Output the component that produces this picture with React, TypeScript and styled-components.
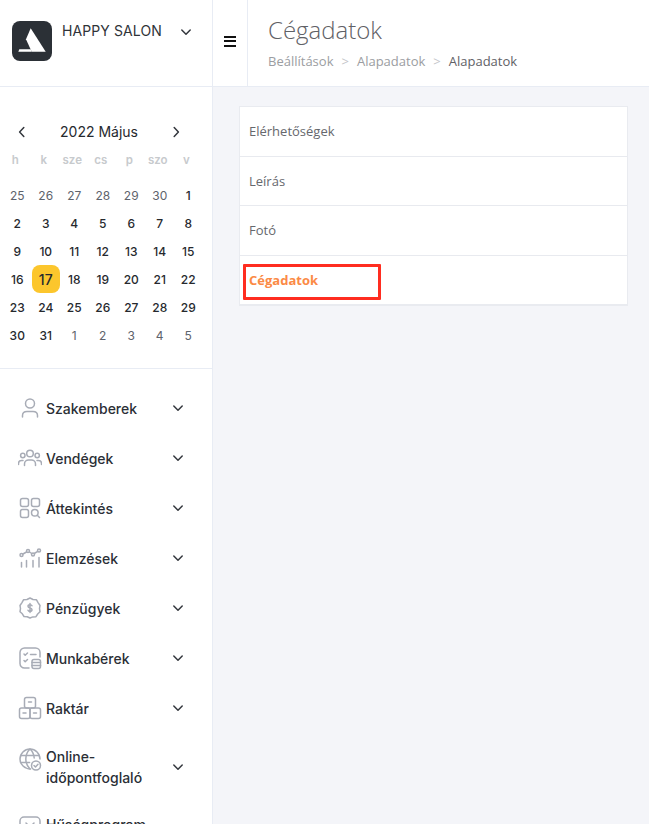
import React from 'react';
import styled, { createGlobalStyle } from 'styled-components';

const GlobalStyle = createGlobalStyle`
  html, body { margin: 0; padding: 0; background: #f4f5f9; }
  * { box-sizing: border-box; }
`;

const weekdays = ['h', 'k', 'sze', 'cs', 'p', 'szo', 'v'];

interface DayCell { label: number; muted?: 'prev' | 'next'; today?: boolean }

const days: DayCell[] = [
  ...[25, 26, 27, 28, 29, 30].map((label) => ({ label, muted: 'prev' as const })),
  ...Array.from({ length: 31 }, (_, i) => ({ label: i + 1, today: i + 1 === 17 })),
  ...[1, 2, 3, 4, 5].map((label) => ({ label, muted: 'next' as const })),
];

const Ic = ({ children }: { children: React.ReactNode }) => (
  <svg width="24" height="24" viewBox="0 0 24 24" fill="none" stroke="#a8acb6" strokeWidth="1.5" strokeLinecap="round" strokeLinejoin="round">
    {children}
  </svg>
);

const Chevron = ({ dir = 'down', color = '#33373d' }: { dir?: 'down' | 'left' | 'right'; color?: string }) => (
  <svg width="12" height="12" viewBox="0 0 12 12" fill="none" stroke={color} strokeWidth="1.5" strokeLinecap="round" strokeLinejoin="round">
    {dir === 'down' && <path d="M1.8 4l4.2 4.2L10.200 4" />}
    {dir === 'left' && <path d="M7.800 1.500L3.600 6l4.200 4.500" />}
    {dir === 'right' && <path d="M4.200 1.500L8.400 6l-4.200 4.500" />}
  </svg>
);

const menu: { label: React.ReactNode; tall?: boolean; icon: React.ReactNode }[] = [
  {
    label: 'Szakemberek',
    icon: (
      <Ic>
        <circle cx="12" cy="7.500" r="4.500" />
        <path d="M4.500 21v-1.500c0-2.500 2-4 4.500-4h6c2.500 0 4.500 1.500 4.500 4V21" />
      </Ic>
    ),
  },
  {
    label: 'Vendégek',
    icon: (
      <Ic>
        <circle cx="12" cy="7.500" r="3.300" />
        <circle cx="4.800" cy="9.500" r="2.200" />
        <circle cx="19.200" cy="9.500" r="2.200" />
        <path d="M6.500 19.500v-1.500c0-2.400 2-4 4-4h3c2 0 4 1.600 4 4v1.500" />
        <path d="M.5 18.500v-1c0-1.800 1.300-3 3-3h1.500" />
        <path d="M23.500 18.500v-1c0-1.800-1.300-3-3-3H19" />
      </Ic>
    ),
  },
  {
    label: 'Áttekintés',
    icon: (
      <Ic>
        <rect x="2.500" y="2.500" width="8" height="8" rx="2" />
        <rect x="13.500" y="2.500" width="8" height="8" rx="2" />
        <rect x="2.500" y="13.500" width="8" height="8" rx="2" />
        <circle cx="16.800" cy="16.800" r="3.300" />
        <path d="M19.300 19.300l2.200 2.200" />
      </Ic>
    ),
  },
  {
    label: 'Elemzések',
    icon: (
      <Ic>
        <circle cx="3.500" cy="9" r="1.500" />
        <circle cx="10" cy="5" r="1.500" />
        <circle cx="15" cy="8.500" r="1.500" />
        <circle cx="21" cy="4.500" r="1.500" />
        <path d="M5 8l3.500-2M11.500 6l2.200 1.500M16.300 7.500l3.400-2.200" />
        <path d="M3.500 16.500V21M8.500 14.500V21M15 14.500V21M21 11.500V21" />
      </Ic>
    ),
  },
  {
    label: 'Pénzügyek',
    icon: (
      <Ic>
        <path d="M12 2l3 1.500 3.500.3 1.700 3 1.800 2.700-.5 3 .5 3.200-2.300 2.300-1.700 2.700-3.200.2L12 22l-2.800-1.300-3.200-.2-1.700-2.700L2 15.700l.5-3.200-.5-3 1.800-2.700 1.700-3L9 3.500z" />
        <path d="M14 9.800c-.3-.7-1-1.100-2-1.100-1.200 0-2 .6-2 1.600 0 2.300 4 1.200 4 3.500 0 1-.8 1.600-2 1.600-1 0-1.700-.4-2-1.100M12 7.500v9" />
      </Ic>
    ),
  },
  {
    label: 'Munkabérek',
    icon: (
      <Ic>
        <path d="M11 22H6.500A4.500 4.500 0 0 1 2 17.500v-11A4.500 4.500 0 0 1 6.500 2h11A4.500 4.500 0 0 1 22 6.500V11" />
        <path d="M6 8l1.200 1.200L9.500 7M12.500 8.500H18M6 14.500l1.200 1.200 2.300-2.200" />
        <rect x="14" y="13.500" width="8.500" height="9" rx="2" />
        <path d="M14 16.500h8.500M14 19.500h8.500" />
      </Ic>
    ),
  },
  {
    label: 'Raktár',
    icon: (
      <Ic>
        <rect x="6.500" y="1.500" width="11" height="10.500" rx="2" />
        <rect x="1.500" y="12" width="10.500" height="10.500" rx="2" />
        <rect x="12" y="12" width="10.500" height="10.500" rx="2" />
        <path d="M10.500 6h3M5 17h3M15.500 17h3" />
      </Ic>
    ),
  },
  {
    label: <>Online-<br />időpontfoglaló</>,
    tall: true,
    icon: (
      <Ic>
        <path d="M12.500 22C6.700 22 2 17.500 2 12S6.500 2 12 2s10 4.500 10 10" />
        <path d="M12 2c-3 3-4.200 6.300-4.200 10s1.200 7 4.200 10M12 2c2.700 2.600 4 5.700 4.200 9" />
        <path d="M2.600 8.500h18.600M2.600 15.500h9" />
        <circle cx="18" cy="18.500" r="4.500" fill="#fff" />
        <path d="M16 18.500l1.500 1.500 2.500-2.700" />
      </Ic>
    ),
  },
  {
    // two lines in the app too, the second falls below the fold
    label: <>Hűségprogram<br />&nbsp;</>,
    tall: true,
    icon: (
      <Ic>
        <rect x="2" y="2" width="20" height="20" rx="4" />
        <path d="M8 8l1.500 1.500M16 8l-1.500 1.500" />
      </Ic>
    ),
  },
];

const rows = [
  { label: 'Elérhetőségek' },
  { label: 'Leírás' },
  { label: 'Fotó' },
  { label: 'Cégadatok', active: true },
];

export default function App() {
  return (
    <Page>
      <GlobalStyle />
      <Sidebar>
        <Brand>
          <Logo>
            <svg width="40" height="40" viewBox="0 0 40 40">
              <path d="M18.700 7.300L33.700 30.700H19.700L14 18.300z" fill="#fff" />
              <path d="M7.300 28.300h11.400l1 2.400H6.300z" fill="#fff" />
            </svg>
          </Logo>
          <BrandName>HAPPY SALON</BrandName>
          <BrandChevron><Chevron /></BrandChevron>
        </Brand>
        <Calendar>
          <CalendarHead>
            <Chevron dir="left" />
            <MonthTitle>2022 Május</MonthTitle>
            <Chevron dir="right" />
          </CalendarHead>
          <WeekdayGrid>
            {weekdays.map((d) => <Weekday key={d}>{d}</Weekday>)}
          </WeekdayGrid>
          <DayGrid>
            {days.map((d, i) => (
              <Day key={i} $muted={d.muted} $today={d.today}>{d.label}</Day>
            ))}
          </DayGrid>
        </Calendar>
        <Menu>
          {menu.map((item, i) => (
            <MenuItem key={i} $tall={item.tall}>
              <MenuIcon $tall={item.tall}>{item.icon}</MenuIcon>
              <MenuLabel>{item.label}</MenuLabel>
              <Chevron />
            </MenuItem>
          ))}
        </Menu>
      </Sidebar>
      <Main>
        <Topbar>
          <BurgerCell>
            <Burger><span /><span /><span /></Burger>
          </BurgerCell>
          <Heading>
            <Title>Cégadatok</Title>
            <Crumbs>
              <Crumb>Beállítások</Crumb>
              <CrumbSep>&gt;</CrumbSep>
              <Crumb>Alapadatok</Crumb>
              <CrumbSep>&gt;</CrumbSep>
              <Crumb $current>Alapadatok</Crumb>
            </Crumbs>
          </Heading>
        </Topbar>
        <Content>
          <Card>
            {rows.map((r) => (
              <Row key={r.label} $active={r.active}>
                {r.label}
                {r.active && <Highlight />}
              </Row>
            ))}
          </Card>
        </Content>
      </Main>
    </Page>
  );
}

const Page = styled.div`
  display: flex;
  width: 649px;
  height: 824px;
  overflow: hidden;
  background: #f4f5f9;
`;

const Sidebar = styled.aside`
  flex: 0 0 213px;
  height: 824px;
  overflow: hidden;
  background: #fff;
  border-right: 1px solid #e8ecf4;
  font-family: Inter, "Liberation Sans", sans-serif;
  color: #2b2f36;
`;

const Brand = styled.div`
  display: flex;
  align-items: flex-start;
  height: 87px;
  padding: 21px 0 0 12px;
  border-bottom: 1px solid #e8ecf4;
`;

const Logo = styled.div`
  width: 40px;
  height: 40px;
  border-radius: 8px;
  background: #2b3036;
  overflow: hidden;
  svg { display: block; }
`;

const BrandName = styled.div`
  margin: 1px 0 0 10px;
  width: 118px;
  font-size: 14px;
  line-height: 17px;
  font-weight: 400;
  letter-spacing: 0.1px;
  color: #2f3338;
`;

const BrandChevron = styled.div`
  margin-top: 5px;
  height: 12px;
  svg { display: block; }
`;

const Calendar = styled.section`
  height: 282px;
  padding: 36px 0 0;
  border-bottom: 1px solid #e8ecf4;
`;

const CalendarHead = styled.div`
  display: flex;
  align-items: center;
  justify-content: space-between;
  width: 166px;
  height: 18px;
  margin-left: 16px;
`;

const MonthTitle = styled.div`
  font-size: 14px;
  line-height: 18px;
  font-weight: 400;
  color: #26292e;
`;

const WeekdayGrid = styled.div`
  display: grid;
  grid-template-columns: repeat(7, 28.5px);
  margin: 12px 0 0 1px;
  height: 18px;
`;

const Weekday = styled.div`
  text-align: center;
  font-size: 11.500px;
  line-height: 14px;
  font-weight: 600;
  color: #c7cacd;
`;

const DayGrid = styled.div`
  display: grid;
  grid-template-columns: repeat(7, 28.500px);
  grid-auto-rows: 28px;
  margin: 10px 0 0 3px;
`;

const Day = styled.div<{ $muted?: 'prev' | 'next'; $today?: boolean }>`
  display: flex;
  align-items: center;
  justify-content: center;
  font-size: ${({ $today }) => ($today ? '14px' : '12px')};
  font-weight: ${({ $muted }) => ($muted ? 400 : 500)};
  color: ${({ $muted }) => ($muted ? '#5e636c' : '#26292e')};
  ${({ $today }) => $today && `
    background: #fcc62d;
    border-radius: 8px;
  `}
`;

const Menu = styled.nav`
  padding-top: 14px;
`;

const MenuItem = styled.div<{ $tall?: boolean }>`
  display: flex;
  align-items: center;
  height: ${({ $tall }) => ($tall ? '68px' : '50px')};
  padding-left: 18px;
  svg { flex: none; display: block; }
`;

const MenuIcon = styled.div<{ $tall?: boolean }>`
  width: 24px;
  margin-right: 4px;
  ${({ $tall }) => $tall && `
    align-self: flex-start;
    margin-top: 14px;
  `}
`;

const MenuLabel = styled.div`
  width: 126px;
  font-size: 14px;
  line-height: 21px;
  font-weight: 500;
  color: #2b2f36;
`;

const Main = styled.main`
  flex: 1;
  min-width: 0;
`;

const Topbar = styled.header`
  display: flex;
  height: 87px;
  background: #fff;
  border-bottom: 1px solid #e8ecf4;
`;

const BurgerCell = styled.div`
  display: flex;
  align-items: center;
  justify-content: center;
  width: 35px;
  border-right: 1px solid #e8ecf4;
`;

const Burger = styled.div`
  display: flex;
  flex-direction: column;
  gap: 2.500px;
  width: 12px;
  margin-left: -1px;
  margin-top: -4px;
  span { display: block; height: 2px; background: #111; }
`;

const Heading = styled.div`
  padding: 13px 0 0 20px;
  font-family: "Open Sans", "Liberation Sans", sans-serif;
`;

const Title = styled.h1`
  margin: 0;
  font-size: 24px;
  line-height: 33px;
  font-weight: 300;
  color: #5f6166;
`;

const Crumbs = styled.div`
  display: flex;
  margin-top: 6px;
  font-size: 13px;
  line-height: 18px;
`;

const Crumb = styled.span<{ $current?: boolean }>`
  color: ${({ $current }) => ($current ? '#5f6166' : '#9b9da1')};
`;

const CrumbSep = styled.span`
  margin: 0 8px;
  color: #c4c6ca;
`;

const Content = styled.div`
  padding: 19px 21px 0 26px;
`;

const Card = styled.section`
  height: 200px;
  background: #fff;
  border: 1px solid #e9ebf0;
  border-bottom-width: 2px;
  font-family: "Open Sans", "Liberation Sans", sans-serif;
`;

const Row = styled.div<{ $active?: boolean }>`
  position: relative;
  display: flex;
  align-items: center;
  height: 49.500px;
  padding-left: 9px;
  font-size: 13px;
  font-weight: ${({ $active }) => ($active ? 700 : 400)};
  color: ${({ $active }) => ($active ? '#fb8a45' : '#66686d')};
  border-bottom: ${({ $active }) => ($active ? '0' : '1px solid #e8eaef')};
`;

const Highlight = styled.div`
  position: absolute;
  left: 3px;
  top: 8px;
  width: 138px;
  height: 36px;
  border: 3px solid #ff2d20;
  border-radius: 1px;
`;
